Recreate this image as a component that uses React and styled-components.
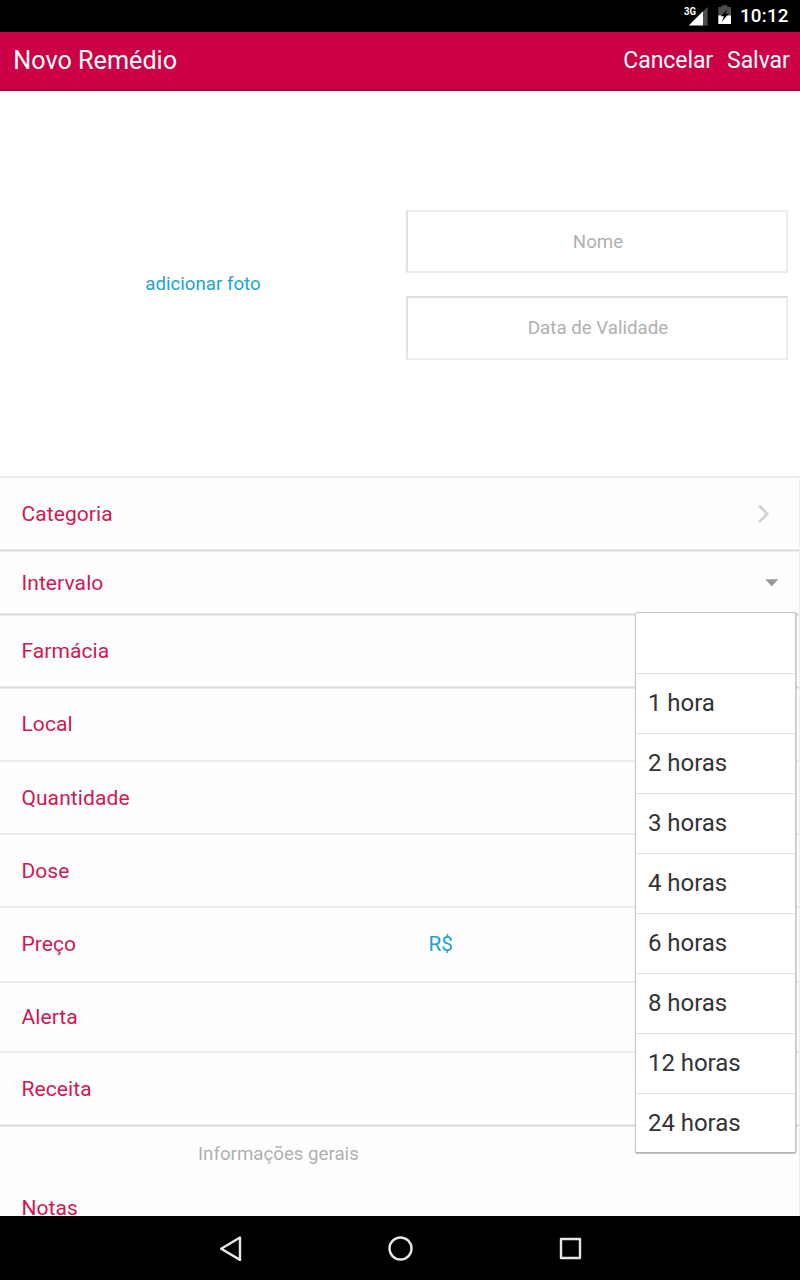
import React from "react";
import styled, { createGlobalStyle } from "styled-components";

const GlobalStyle = createGlobalStyle`
  * { box-sizing: border-box; }
  body { margin: 0; background: #fff; font-family: Roboto, "Liberation Sans", sans-serif; }
`;

const Screen = styled.div`
  position: relative;
  width: 800px;
  height: 1280px;
  display: flex;
  flex-direction: column;
  overflow: hidden;
`;

const StatusBar = styled.div`
  flex: none;
  height: 32px;
  background: #000;
  color: #fff;
  display: flex;
  justify-content: flex-end;
  padding-right: 11px;
`;

const StatusIcons = styled.svg`
  width: 56px;
  height: 32px;
`;

const Clock = styled.span`
  width: 49px;
  font-size: 18.8px;
  font-weight: 500;
  line-height: 32px;
  letter-spacing: 0.2px;
`;

const Toolbar = styled.header`
  flex: none;
  height: 59px;
  display: flex;
  align-items: center;
  background: #cc0044;
  border-bottom: 2px solid #a60038;
  color: #fff;
  padding: 0 10.3px 0 13.3px;
`;

const Title = styled.h1`
  flex: 1;
  margin: 0;
  font-size: 25.2px;
  font-weight: 400;
  line-height: 30px;
`;

const Action = styled.button`
  border: 0;
  padding: 0;
  margin-left: 14px;
  background: none;
  color: #fff;
  font: 400 23px/30px Roboto, sans-serif;
  letter-spacing: -0.07px;
`;

const Content = styled.main`
  flex: 1;
  min-height: 0;
  overflow: hidden;
  background: #fefefe;
`;

const Hero = styled.section`
  height: 385px;
  display: flex;
  background: #fff;
`;

const PhotoCell = styled.div`
  width: 406px;
  display: flex;
  align-items: center;
  justify-content: center;
`;

const PhotoLink = styled.span`
  color: #1ba4d0;
  font-size: 18.7px;
  line-height: 24px;
`;

const Fields = styled.div`
  display: flex;
  flex-direction: column;
  gap: 23px;
  padding-top: 119px;
`;

const Field = styled.div`
  width: 382px;
  height: ${(p) => p.$height}px;
  border: 2px solid #ececec;
  border-left-color: #e2e2e2;
  border-top-color: ${(p) => (p.$strong ? "#dedede" : "#ececec")};
  color: #b0b0b0;
  font-size: 18.7px;
  line-height: 24px;
  padding: 18px 0 0 2px;
  text-align: center;
`;

const List = styled.section`
  border-top: 2px solid #ececec;
  border-right: 1px solid #efefef;
  height: 800px;
`;

const Row = styled.div`
  display: flex;
  height: ${(p) => p.$height}px;
  padding: ${(p) => p.$top}px 0 0 21.4px;
`;

const Divider = styled.div`
  height: ${(p) => (p.$strong ? 3 : 2)}px;
  background: ${(p) =>
    p.$strong
      ? "linear-gradient(#ececec 1px, #dadada 1px, #dadada 2px, #ebebeb 2px)"
      : "#ececec"};
`;

const Label = styled.span`
  width: 407px;
  color: #d01852;
  font-size: 21px;
  line-height: 24px;
  letter-spacing: 0.1px;
`;

const Value = styled.span`
  color: #1ba4d0;
  font-size: 20.8px;
  line-height: 24px;
`;

const Chevron = styled.svg`
  width: 14px;
  height: 20px;
  margin: 2px 0 0 328.6px;
`;

const Caret = styled.svg`
  width: 14px;
  height: 8px;
  margin: 8px 0 0 336.6px;
`;

const SectionTitle = styled.div`
  height: 62px;
  padding: 15px 0 0 198px;
  color: #b0b0b0;
  font-size: 18.7px;
  line-height: 24px;
`;

const Menu = styled.ul`
  position: absolute;
  left: 635px;
  top: 612px;
  width: 161px;
  height: 541px;
  margin: 0;
  padding: 0;
  list-style: none;
  background: #fff;
  border: 1px solid #c8c8c8;
  border-bottom-color: #b4b4b4;
  border-radius: 2px;
  box-shadow: 0 1px 1px rgba(0, 0, 0, 0.25), 1px 0 0 rgba(0, 0, 0, 0.12);
`;

const Option = styled.li`
  height: 60px;
  padding-left: 12px;
  border-top: 1px solid #e2e2e2;
  color: #333;
  font-size: 24px;
  line-height: 58px;
  letter-spacing: -0.05px;
  &:first-child { border-top-color: transparent; }
  &:last-child { height: 59px; }
`;

const NavBar = styled.nav`
  flex: none;
  height: 64px;
  background: #000;
  display: flex;
  align-items: center;
  justify-content: center;
  gap: 138px;
`;

const NavIcon = styled.svg`
  width: 32px;
  height: 32px;
  fill: none;
  stroke: #e6e6e6;
  stroke-width: 2.4;
  stroke-linejoin: round;
`;

const rows = [
  { label: "Categoria", height: 71, top: 24, strong: true, icon: "chevron" },
  { label: "Intervalo", height: 61, top: 19, strong: true, icon: "caret" },
  { label: "Farmácia", height: 70, top: 23, strong: true },
  { label: "Local", height: 71, top: 23 },
  { label: "Quantidade", height: 71, top: 24 },
  { label: "Dose", height: 71, top: 24 },
  { label: "Preço", height: 73, top: 24, value: "R$" },
  { label: "Alerta", height: 68, top: 22 },
  { label: "Receita", height: 71, top: 24, strong: true },
];

const options = ["", "1 hora", "2 horas", "3 horas", "4 horas", "6 horas", "8 horas", "12 horas", "24 horas"];

export default function App() {
  return (
    <Screen>
      <GlobalStyle />
      <StatusBar>
        <StatusIcons viewBox="0 0 56 32">
          <text x="0" y="15" fill="#fff" fontFamily="Roboto" fontSize="10" fontWeight="700" textLength="12" lengthAdjust="spacingAndGlyphs">3G</text>
          <path d="M18.5 12L23.6 7v18.5h-5.1z" fill="#4d4d4d" />
          <path d="M19 11.2v14.3H4.7z" fill="#fff" />
          <path d="M34.3 7h3.2V5.2h6V7H47v9H34.3z" fill="#4d4d4d" />
          <path d="M34.3 15.5H47V24H34.3z" fill="#fff" />
          <path d="M43.4 9.2l-6.6 7h3.1l-2.1 5.6 6.8-8h-3.2z" fill="#000" />
        </StatusIcons>
        <Clock>10:12</Clock>
      </StatusBar>
      <Toolbar>
        <Title>Novo Remédio</Title>
        <Action>Cancelar</Action>
        <Action>Salvar</Action>
      </Toolbar>
      <Content>
        <Hero>
          <PhotoCell><PhotoLink>adicionar foto</PhotoLink></PhotoCell>
          <Fields>
            <Field $height={63}>Nome</Field>
            <Field $height={64} $strong>Data de Validade</Field>
          </Fields>
        </Hero>
        <List>
          {rows.map((r) => (
            <React.Fragment key={r.label}>
              <Row $height={r.height} $top={r.top}>
                <Label>{r.label}</Label>
                {r.value && <Value>{r.value}</Value>}
                {r.icon === "chevron" && (
                  <Chevron viewBox="0 0 14 20" fill="none" stroke="#d2d2d2" strokeWidth="2.8">
                    <path d="M2.2 1.6l8 8.2-8 8.2" />
                  </Chevron>
                )}
                {r.icon === "caret" && (
                  <Caret viewBox="0 0 14 8"><path d="M0.3 0.3h13L6.8 7.2z" fill="#979797" /></Caret>
                )}
              </Row>
              <Divider $strong={r.strong} />
            </React.Fragment>
          ))}
          <SectionTitle>Informações gerais</SectionTitle>
          <Row $height={71} $top={7}><Label>Notas</Label></Row>
        </List>
      </Content>
      <NavBar>
        <NavIcon viewBox="0 0 32 32"><path d="M26 5.5v22.4L7.2 16.7z" /></NavIcon>
        <NavIcon viewBox="0 0 32 32"><circle cx="16.5" cy="16.5" r="11" /></NavIcon>
        <NavIcon viewBox="0 0 32 32"><path d="M7 7h19v19H7z" /></NavIcon>
      </NavBar>
      <Menu>
        {options.map((o) => <Option key={o}>{o}</Option>)}
      </Menu>
    </Screen>
  );
}
